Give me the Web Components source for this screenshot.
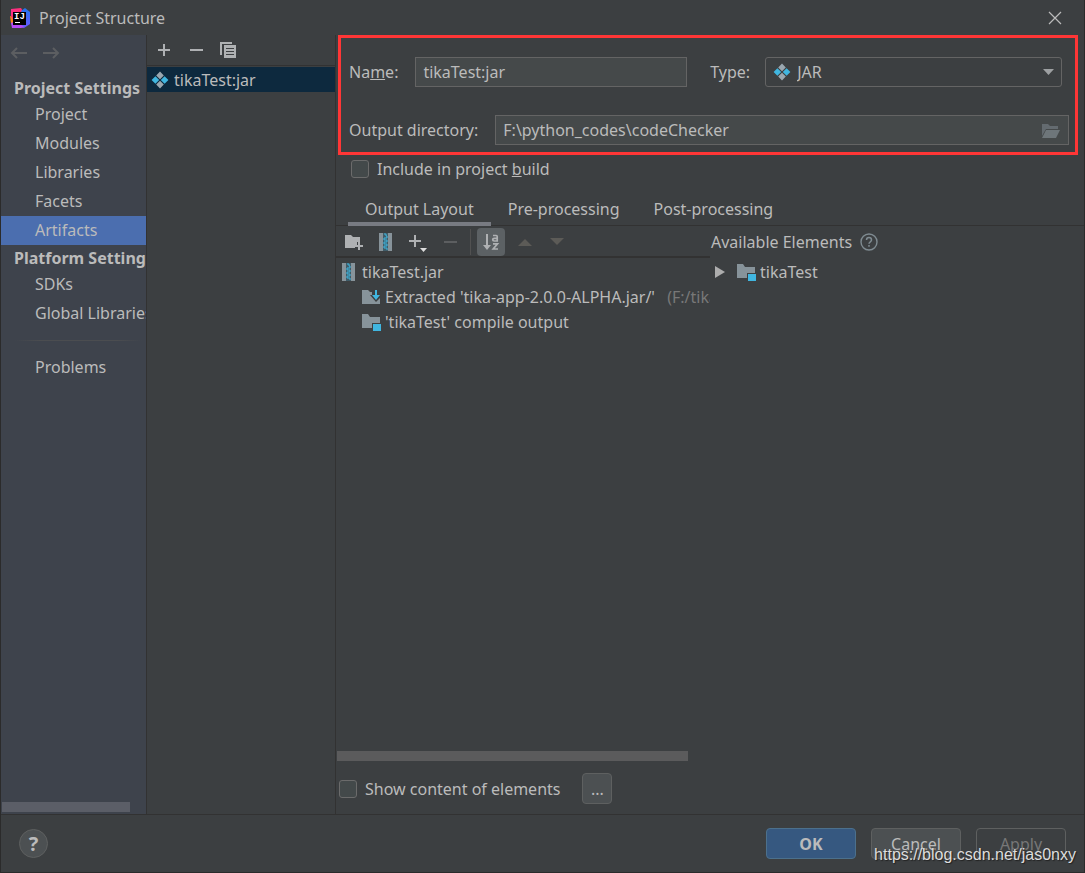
<!DOCTYPE html>
<html lang="en">
<head>
<meta charset="utf-8">
<title>Project Structure</title>
<style>
  html, body { height: 100%; margin: 0; }
  body {
    --bg: #3c3f41; --line: #323232; --text: #bbbbbb; --field: #45494a; --edge: #646464;
    background: var(--bg); color: var(--text);
    font: 16px/24px "Noto Sans", "Open Sans", sans-serif;
  }
</style>
</head>
<body>
<structure-dialog>
  <title-bar slot="title">Project Structure</title-bar>
  <settings-nav slot="nav"></settings-nav>
  <artifact-list slot="list"></artifact-list>
  <artifact-editor slot="editor"></artifact-editor>
  <dialog-footer slot="footer"></dialog-footer>
</structure-dialog>

<script>
const define = (name, html, setup) => {
  const template = document.createElement('template');
  template.innerHTML = html;
  customElements.define(name, class extends HTMLElement {
    constructor() {
      super();
      this.attachShadow({ mode: 'open' }).append(template.content.cloneNode(true));
    }
    connectedCallback() { if (setup) setup(this, this.shadowRoot); }
  });
};

const ZIP = `<path fill="#87939a" d="M2 0h4v18H2zM11 0h4v18h-4z"/><path fill="#3f5c69" d="M6 0h5v18H6z"/>
  <path fill="none" stroke="#40b6e0" stroke-width="1" d="M7 1h2v2h1v2H7v2h3v2H7v2h3v2H7v2h3v2"/>`;
const ICONS = {
  logo: [22, `<defs><linearGradient id="a" x2="1" y2="1"><stop stop-color="#ff318c"/><stop offset="1" stop-color="#fe2857"/></linearGradient>
    <linearGradient id="b" x2="0" y2="1"><stop stop-color="#2176ee"/><stop offset="1" stop-color="#6a57ff"/></linearGradient></defs>
    <path fill="#fc801d" d="M1 9l7 2-3 7-3-2z"/><path fill="url(#a)" d="M2 2l10-1 3 5-9 10-4-7z"/>
    <path fill="url(#b)" d="M12 4l4-3 5 4v12l-6 4-9-2 9-8z"/><path fill="#b74af7" d="M2 16l5-2 8 6-3 1H3z"/>
    <path fill="#000" d="M4 5h13v13H4z"/><path fill="#fff" d="M6 15h5v1H6z"/>
    <text x="5" y="12" fill="#fff" font-family="Liberation Mono" font-weight="bold" font-size="9">IJ</text>`],
  back: [18, '<path fill="none" stroke="#5c5e61" stroke-width="2" d="M17 9H2M7 4L2 9l5 5"/>'],
  forward: [18, '<path fill="none" stroke="#5c5e61" stroke-width="2" d="M1 9h15M11 4l5 5-5 5"/>'],
  close: [14, '<path fill="none" stroke="#bbbbbb" stroke-width="1.2" d="M1 1l12 12M13 1L1 13"/>'],
  plus: [14, '<path fill="#afb1b3" d="M6 1h2v5h5v2H8v5H6V8H1V6h5z"/>'],
  minus: [14, '<path fill="#afb1b3" d="M1 6h13v2H1z"/>'],
  copy: [18, '<path fill="#afb1b3" d="M1 1h12v2H3v11H1z"/><path fill="#afb1b3" d="M5 4h12v13H5z"/><path stroke="#3c3f41" d="M7 7.5h8M7 10.5h8M7 13.5h8"/>'],
  jar: [18, '<path fill="#9aa7b0" d="M9 .6l3.800 3.800L9 8.200 5.200 4.400zM9 9.800l3.800 3.800L9 17.400l-3.800-3.800z"/><path fill="#40b6e0" d="M4.400 5.200L8.200 9l-3.800 3.800L.6 9zM13.600 5.200L17.400 9l-3.800 3.800L9.800 9z"/>'],
  open: [20, '<path fill="#646b70" d="M1 3h6l2 2h8v3H5l-4 7z"/><path fill="#6e767a" d="M5 9h14l-4 8H1z"/>'],
  addfolder: [20, '<path fill="#afb1b3" d="M1 3h6l2 2h7v5h-3v3h-2v3H1z"/><path fill="#afb1b3" d="M14 10h2v3h3v2h-3v3h-2v-3h-3v-2h3z"/>'],
  zip: [18, ZIP],
  addmenu: [20, '<path fill="#afb1b3" d="M6 3h2v5h5v2H8v5H6v-5H1V8h5z"/><path fill="#dddddd" d="M12 16h7l-3.500 4z"/>'],
  minusoff: [14, '<path fill="#5c5e60" d="M1 6h13v2H1z"/>'],
  sort: [20, `<path fill="#afb1b3" d="M5 2h2v11h3l-4 5-4-5h3z"/>
    <path fill="none" stroke="#afb1b3" stroke-width="1.700" d="M12 3.500h3.200q1 0 1 1V9h-3q-1.500 0-1.500-1.300t1.500-1.300h3M12 11.800h4.500L12.200 17H17"/>`],
  up: [16, '<path fill="#5c5b57" d="M1 12l7-7 7 7z"/>'],
  down: [16, '<path fill="#5c5b57" d="M1 4h14l-7 7z"/>'],
  extracted: [20, '<path fill="#87939a" d="M1 3h6l2 2h2v3h-2l6 7 4-4v6H1z"/><path fill="#40b6e0" d="M14 3h2v5h3l-4 5-4-5h3z"/>'],
  module: [20, '<path fill="#87939a" d="M1 2h6l2 3h10v6h-8v5H1z"/><path fill="#40b6e0" d="M12 12h8v7h-8z"/>'],
  expand: [12, '<path fill="#adadad" d="M1 0l10 6-10 6z"/>'],
  help: [18, '<circle cx="9" cy="9" r="8" fill="none" stroke="#7f8b91" stroke-width="1.400"/><path fill="none" stroke="#7f8b91" stroke-width="1.500" d="M6.500 7q0-2.500 2.500-2.500T11.500 7q0 1-1.200 1.800T9 10.800M9 12v1.700"/>'],
  arrow: [12, '<path fill="#9da0a2" d="M1 3h11L6.500 9z"/>'],
};
customElements.define('ui-icon', class extends HTMLElement {
  connectedCallback() {
    if (this.shadowRoot) return;
    const [size, body] = ICONS[this.getAttribute('name')];
    this.attachShadow({ mode: 'open' }).innerHTML =
      `<style>:host{display:block;flex:none}svg{display:block}</style>
       <svg width="${size}" height="${size}" viewBox="0 0 ${size} ${size}" aria-hidden="true">${body}</svg>`;
  }
});

define('icon-button', `
<style>
  :host { display: block; flex: none; }
  button { all: unset; display: grid; place-items: center; width: var(--w, 32px); height: 28px; border-radius: 4px; }
  :host([pressed]) button { background: #5c6164; }
</style><button><slot></slot></button>`, (host, root) =>
  root.querySelector('button').setAttribute('aria-label', host.getAttribute('label')));

define('push-button', `
<style>
  :host { display: block; }
  button { box-sizing: border-box; width: 90px; height: 31px; padding: 0; border: 1px solid #5e6060; border-radius: 4px;
    background: #4c5052; color: inherit; font: inherit; }
  :host([primary]) button { background: #365880; border-color: #4c708c; font-weight: bold; }
  :host([off]) button { background: none; color: #777777; }
  :host([small]) button { width: 30px; }
</style><button><slot></slot></button>`, (host, root) => {
  root.querySelector('button').disabled = host.hasAttribute('off');
});

define('check-option', `
<style>
  :host { display: block; }
  label { display: flex; align-items: center; gap: 8px; white-space: nowrap; }
  input { appearance: none; box-sizing: border-box; width: 18px; height: 18px; margin: 0;
    border: 1px solid #6b6b6b; border-radius: 3px; background: #43494a; }
</style><label><input type="checkbox"><span><slot></slot></span></label>`);

define('tree-row', `
<style>
  :host { display: flex; align-items: center; gap: 4px; height: 25px; white-space: nowrap; }
</style><slot name="icon"></slot><span><slot></slot></span>`);

define('title-bar', `
<style>
  :host { display: flex; align-items: center; height: 35px; padding: 0 21px 0 8px; }
  h1 { flex: 1; margin: 0 0 0 8px; font: inherit; }
</style>
<ui-icon name="logo"></ui-icon><h1><slot></slot></h1>
<icon-button label="Close" style="--w:16px"><ui-icon name="close"></ui-icon></icon-button>`);

define('settings-nav', `
<style>
  :host { display: flex; flex-direction: column; overflow: hidden; background: #3e434c; }
  .history { display: flex; padding: 4px 0 8px 2px; }
  nav { flex: 1; }
  h2 { height: 25px; margin: 0; padding-left: 13px; font-size: 16px; line-height: 27px; white-space: nowrap; }
  a { display: block; height: 29px; padding-left: 34px; line-height: 29px; color: inherit; text-decoration: none; white-space: nowrap; }
  a[aria-current] { background: #4b6eaf; }
  hr { height: 1px; margin: 12px 4px 12px 14px; border: 0; background: linear-gradient(90deg, transparent, #4b4d50 20%, #4b4d50 80%, transparent); }
  .bar { width: 128px; height: 10px; margin: 0 0 2px 1px; background: #5b5e67; }
</style>
<div class="history">
  <icon-button label="Back"><ui-icon name="back"></ui-icon></icon-button>
  <icon-button label="Forward"><ui-icon name="forward"></ui-icon></icon-button>
</div>
<nav>
  <h2>Project Settings</h2>
  <a href="#project">Project</a><a href="#modules">Modules</a><a href="#libraries">Libraries</a>
  <a href="#facets">Facets</a><a href="#artifacts" aria-current="page">Artifacts</a>
  <h2>Platform Settings</h2>
  <a href="#sdks">SDKs</a><a href="#global">Global Libraries</a>
  <hr>
  <a href="#problems">Problems</a>
</nav>
<div class="bar"></div>`);

define('artifact-list', `
<style>
  :host { display: block; border: solid var(--line); border-width: 0 1px; }
  .tools { box-sizing: border-box; display: flex; height: 31px; padding: 1px 0 0 1px; border-bottom: 1px solid var(--line); }
  tree-row { margin-top: 1px; padding-left: 4px; gap: 5px; background: #0d293e; }
</style>
<div class="tools">
  <icon-button label="Add"><ui-icon name="plus"></ui-icon></icon-button>
  <icon-button label="Remove"><ui-icon name="minus"></ui-icon></icon-button>
  <icon-button label="Copy"><ui-icon name="copy"></ui-icon></icon-button>
</div>
<tree-row><ui-icon slot="icon" name="jar"></ui-icon>tikaTest:jar</tree-row>`);

define('artifact-form', `
<style>
  :host { display: flex; flex-direction: column; gap: 28px; margin: 0 6px 0 2px; padding: 19px 6px 7px 8px; border: 3px solid #ff3636; }
  .row { display: flex; align-items: center; }
  .field { position: relative; flex: 1; display: flex; }
  input, select { box-sizing: border-box; flex: 1; min-width: 0; width: 100%; height: 30px; padding: 0 7px; border: 1px solid var(--edge);
    border-radius: 0; outline: 0; background: var(--field); color: inherit; font: inherit; }
  select { appearance: none; padding-left: 31px; border-radius: 3px; background: var(--bg); }
  .row:first-of-type { padding-right: 7px; }
  .name { margin-left: 17px; flex: 272; }
  .type { margin-left: 15px; flex: 297; }
  label[for=type] { margin-left: 23px; }
  .dir { margin-left: 17px; }
  .lead, .trail { position: absolute; top: 6px; pointer-events: none; }
  .lead { left: 8px; }
  .trail { right: 8px; }
  .type .trail { top: 9px; }
</style>
<div class="row">
  <label for="name">Na<u>m</u>e:</label>
  <div class="field name"><input id="name" value="tikaTest:jar"></div>
  <label for="type">Type:</label>
  <div class="field type"><select id="type"><option>JAR</option></select>
    <ui-icon class="lead" name="jar"></ui-icon><ui-icon class="trail" name="arrow"></ui-icon></div>
</div>
<div class="row">
  <label for="dir">Output directory:</label>
  <div class="field dir"><input id="dir" value="F:\\python_codes\\codeChecker"><ui-icon class="trail" name="open"></ui-icon></div>
</div>`);

define('tab-strip', `
<style>
  :host { display: flex; margin-top: 12px; padding-left: 12px; border-bottom: 1px solid var(--line); }
  button { all: unset; height: 32px; padding: 0 17px; line-height: 32px; }
  button[aria-selected=true] { height: 29px; margin-bottom: 3px; box-shadow: 0 4px #787b82; }
</style>
<button role="tab" aria-selected="true">Output Layout</button>
<button role="tab">Pre-processing</button>
<button role="tab">Post-processing</button>`);

define('layout-tree', `
<style>
  :host { display: flex; flex-direction: column; min-width: 0; overflow: hidden; }
  .tools { box-sizing: border-box; display: flex; align-items: center; height: 32px; padding: 2px 0 0 2px; border-bottom: 2px solid var(--line); }
  .sep { width: 1px; height: 26px; margin: 0 6px 0 4px; background: #515151; }
  [pressed] { margin-right: 4px; }
  .rows { flex: 1; padding: 1px 0 0 4px; }
  .child { padding-left: 21px; }
  .path { margin-left: 8px; color: #787878; }
  .bar { width: 351px; height: 10px; margin: 0 0 8px 1px; background: #5b5b5c; }
  .options { display: flex; align-items: center; gap: 22px; margin: 4px 0 10px 3px; }
</style>
<div class="tools">
  <icon-button label="New folder"><ui-icon name="addfolder"></ui-icon></icon-button>
  <icon-button label="New archive"><ui-icon name="zip"></ui-icon></icon-button>
  <icon-button label="Add copy of"><ui-icon name="addmenu"></ui-icon></icon-button>
  <icon-button label="Remove"><ui-icon name="minusoff"></ui-icon></icon-button>
  <div class="sep"></div>
  <icon-button label="Sort" pressed style="--w:28px"><ui-icon name="sort"></ui-icon></icon-button>
  <icon-button label="Move up"><ui-icon name="up"></ui-icon></icon-button>
  <icon-button label="Move down"><ui-icon name="down"></ui-icon></icon-button>
</div>
<div class="rows">
  <tree-row><ui-icon slot="icon" name="zip"></ui-icon>tikaTest.jar</tree-row>
  <tree-row class="child"><ui-icon slot="icon" name="extracted"></ui-icon>Extracted 'tika-app-2.0.0-ALPHA.jar/' <span class="path">(F:/tika)</span></tree-row>
  <tree-row class="child"><ui-icon slot="icon" name="module"></ui-icon>'tikaTest' compile output</tree-row>
</div>
<div class="bar"></div>
<div class="options">
  <check-option>Show content of elements</check-option>
  <push-button small>...</push-button>
</div>`);

define('available-elements', `
<style>
  :host { display: block; padding-left: 1px; }
  header { display: flex; align-items: center; gap: 8px; height: 32px; }
  .rows { padding: 1px 0 0 3px; }
  tree-row div { display: flex; align-items: center; gap: 10px; }
</style>
<header>Available Elements <ui-icon name="help"></ui-icon></header>
<div class="rows">
  <tree-row><div slot="icon"><ui-icon name="expand"></ui-icon><ui-icon name="module"></ui-icon></div>tikaTest</tree-row>
</div>`);

define('artifact-editor', `
<style>
  :host { display: flex; flex-direction: column; min-width: 0; }
  .include { margin: 2px 0 0 15px; }
  .panes { flex: 1; display: grid; grid-template-columns: minmax(0, 1fr) minmax(0, 1fr); }
</style>
<artifact-form></artifact-form>
<check-option class="include">Include in project <u>b</u>uild</check-option>
<tab-strip role="tablist"></tab-strip>
<div class="panes"><layout-tree></layout-tree><available-elements></available-elements></div>`);

define('dialog-footer', `
<style>
  :host { position: relative; display: flex; align-items: center; gap: 15px; height: 57px; padding: 0 18px; border-top: 1px solid var(--line); }
  .help { box-sizing: border-box; width: 29px; height: 29px; margin-right: auto; padding: 0; border: 1px solid #5e6060; border-radius: 50%;
    background: #4c5052; color: inherit; font: bold 20px/24px "Noto Sans", sans-serif; }
  .mark { position: absolute; right: 8px; bottom: 5px; color: #dddddd; font: 16px/24px "Liberation Sans", sans-serif;
    text-shadow: 1px 1px 1px #222; }
</style>
<button class="help" aria-label="Help">?</button>
<push-button primary>OK</push-button>
<push-button>Cancel</push-button>
<push-button off>Apply</push-button>
<span class="mark">https://blog.csdn.net/jas0nxy</span>`);

define('structure-dialog', `
<style>
  :host { box-sizing: border-box; display: flex; flex-direction: column; min-height: 100%; border: 1px solid #2b2b2b; border-top: 0; }
  main { flex: 1; display: grid; grid-template-columns: 145px 190px minmax(0, 1fr); }
</style>
<slot name="title"></slot>
<main><slot name="nav"></slot><slot name="list"></slot><slot name="editor"></slot></main>
<slot name="footer"></slot>`);
</script>
</body>
</html>
